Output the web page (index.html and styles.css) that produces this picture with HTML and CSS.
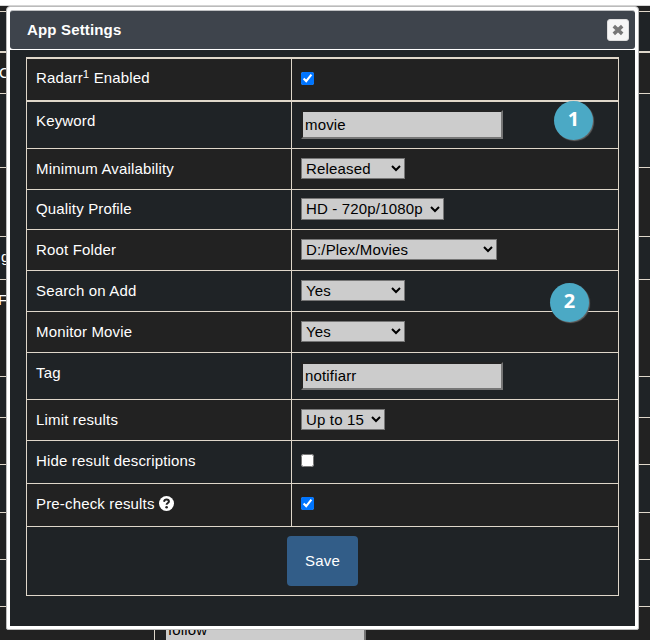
FILE: index.html
```html
<!DOCTYPE html>
<html lang="en">
<head>
<meta charset="utf-8">
<title>App Settings</title>
<link rel="stylesheet" href="styles.css">
</head>
<body>
<div class="page">
  <div class="strip"></div>
  <div class="bg h6"></div>
  <div class="bg alt thick h41"></div>
  <div class="bg h41"><span class="peek c">C</span></div>
  <div class="bg alt h74"></div>
  <div class="bg h69"></div>
  <div class="bg alt h43"><span class="peek g">g</span></div>
  <div class="bg h97"><span class="peek f">F</span></div>
  <div class="bg alt h41"></div>
  <div class="bg h47"></div>
  <div class="bg alt h48"></div>
  <div class="bg h47"></div>
  <div class="bg alt h47"></div>
  <div class="bg last"><div class="last-label"></div><div class="last-value"><div class="follow">follow</div></div></div>
</div>

<div class="dialog">
  <header class="titlebar">
    <span>App Settings</span>
    <button class="close" aria-label="Close"><svg width="14" height="14" viewBox="0 0 14 14"><path d="M2.8 3.2L11.2 10.8M11.2 3.2L2.8 10.8" stroke="#777" stroke-width="3.6"/></svg></button>
  </header>
  <div class="content">
    <div class="table">
      <div class="row first"><div class="label">Radarr<sup>1</sup> Enabled</div><div class="value"><input type="checkbox" checked></div></div>
      <div class="row alt text"><div class="label">Keyword</div><div class="value"><input class="field tall" type="text" value="movie"></div></div>
      <div class="row"><div class="label low">Minimum Availability</div><div class="value"><select><option>Released</option></select></div></div>
      <div class="row alt short"><div class="label">Quality Profile</div><div class="value"><select class="profile"><option>HD - 720p/1080p</option></select></div></div>
      <div class="row"><div class="label low">Root Folder</div><div class="value"><select class="folder"><option>D:/Plex/Movies</option></select></div></div>
      <div class="row alt"><div class="label low">Search on Add</div><div class="value"><select><option>Yes</option></select></div></div>
      <div class="row"><div class="label low">Monitor Movie</div><div class="value"><select><option>Yes</option></select></div></div>
      <div class="row alt text"><div class="label low">Tag</div><div class="value"><input class="field" type="text" value="notifiarr"></div></div>
      <div class="row"><div class="label low">Limit results</div><div class="value"><select class="limit"><option>Up to 15</option></select></div></div>
      <div class="row alt check"><div class="label low">Hide result descriptions</div><div class="value"><input type="checkbox"></div></div>
      <div class="row check"><div class="label low">Pre-check results <svg class="help" width="15" height="15" viewBox="0 0 15 15"><circle cx="7.5" cy="7.5" r="7.5" fill="#fff"/><path d="M5 5.8C5.3 4.2 6.3 3.6 7.5 3.6c1.4 0 2.4.8 2.4 1.9 0 1.6-2.3 1.5-2.3 3.3" fill="none" stroke="#222" stroke-width="2"/><circle cx="7.6" cy="11.2" r="1.3" fill="#222"/></svg></div><div class="value"><input type="checkbox" checked></div></div>
      <div class="row alt actions"><button class="save">Save</button></div>
    </div>
  </div>
  <div class="marker one">1</div>
  <div class="marker two">2</div>
</div>
</body>
</html>
```
FILE: styles.css
```css
* { box-sizing: border-box; }
body {
  margin: 0;
  width: 650px;
  height: 640px;
  overflow: hidden;
  background: #222;
  color: #fff;
  font: 15px/22px "Liberation Sans", Arial, sans-serif;
  letter-spacing: 0.16px;
}
.page { height: 640px; overflow: hidden; display: flex; flex-direction: column; }
.strip { height: 6px; flex: none; background: #fff; border-bottom: 1px solid #d4d4d4; }
.bg { flex: none; background: #222; border-bottom: 1px solid #dfd7ca; overflow: hidden; }
.bg.alt { background: #1f2326; }
.bg.thick { border-bottom-width: 2px; }
.h6 { height: 6px; }
.h41 { height: 41px; }
.h43 { height: 43px; }
.h47 { height: 47px; }
.h48 { height: 48px; }
.h69 { height: 69px; }
.h74 { height: 74px; }
.h97 { height: 97px; }
.peek { display: block; width: 8px; }
.c { padding-top: 9px; margin-left: -1px; }
.g { padding-top: 9px; margin-left: 1px; }
.f { height: 22px; margin-top: 9px; background: linear-gradient(#d22, #d22) 0 6px / 1px 10px no-repeat; text-indent: -2px; }
.bg.last { height: 33px; border: 0; display: flex; }
.last-label { width: 155px; border-right: 1px solid #dfd7ca; }
.last-value { padding: 10px 0 0 11px; }
.follow { width: 200px; height: 29px; padding-left: 2px; line-height: 25px; background: #ccc; color: #000; border-right: 2px solid #767676; }

.dialog {
  position: absolute;
  left: 6px;
  top: 6px;
  width: 633px;
  height: 624px;
  border: 1px solid #bbb;
  border-radius: 4px 4px 2px 2px;
  background: #fff;
  padding: 3px;
  display: flex;
  flex-direction: column;
}
.titlebar {
  height: 39px;
  margin: 0 0 1px;
  padding: 0 6px 0 17px;
  display: flex;
  align-items: center;
  justify-content: space-between;
  background: #3e444c;
  border-top: 1px solid #bfc1c3;
  border-radius: 3px;
  font-weight: bold;
}
.close { width: 22px; height: 22px; padding: 0; display: grid; place-items: center; background: #f6f6f6; border: 1px solid #ddd; border-radius: 3px; }
.content { flex: 1; background: #1f2326; padding: 7px 16px 0; }
.table { border: 1px solid #dfd7ca; border-width: 2px 1px 0; }
.row { height: 41px; display: grid; grid-template-columns: 265px 1fr; background: #222; border-bottom: 1px solid #dfd7ca; }
.row.alt { background: #1f2326; }
.row.first { height: 43px; border-bottom-width: 2px; }
.row.text { height: 47px; }
.row.short { height: 40px; }
.row.check { height: 43px; }
.row.actions { height: 69px; display: flex; justify-content: center; align-items: center; }
.label { padding: 8px 0 0 9px; border-right: 1px solid #dfd7ca; white-space: nowrap; }
.label.low { padding-top: 9px; }
sup { font-size: 11.5px; line-height: 0; position: relative; top: -5px; vertical-align: baseline; }
.help { vertical-align: -2px; margin-left: 0; }
.value { padding-left: 9px; display: flex; align-items: center; }
input, select { margin: 0; font: inherit; letter-spacing: inherit; color: #000; }
input[type="checkbox"] { width: 13px; height: 13px; margin-bottom: 2px; }
.check input[type="checkbox"] { margin-bottom: 3px; }
select { width: 104px; height: 21px; margin-bottom: 2px; padding: 0; background-color: #ccc; border: 1px solid #767676; border-radius: 0; line-height: normal; }
.profile { width: 143px; height: 22px; }
.folder { width: 196px; }
.limit { width: 84px; }
.field { width: 202px; height: 28px; margin-bottom: 1px; padding: 0 2px 1px; background: #ccc; background-clip: padding-box; border: 2px solid; border-color: #222 #767676 #767676 #222; border-radius: 0; }
.field.tall { height: 29px; margin-bottom: 2px; padding: 1px 2px 0; }
.save { width: 71px; height: 50px; border: 0; border-radius: 4px; background: #325d88; color: #fff; font: inherit; letter-spacing: inherit; }
.marker {
  position: absolute;
  width: 39px;
  height: 39px;
  border-radius: 50%;
  background: #4ba9c5;
  box-shadow: 1px 1px 1px #666;
  font: bold 20px/36px "Noto Sans", sans-serif;
  letter-spacing: 0;
  text-align: center;
}
.one { left: 547px; top: 94px; }
.two { left: 543px; top: 276px; }
```
